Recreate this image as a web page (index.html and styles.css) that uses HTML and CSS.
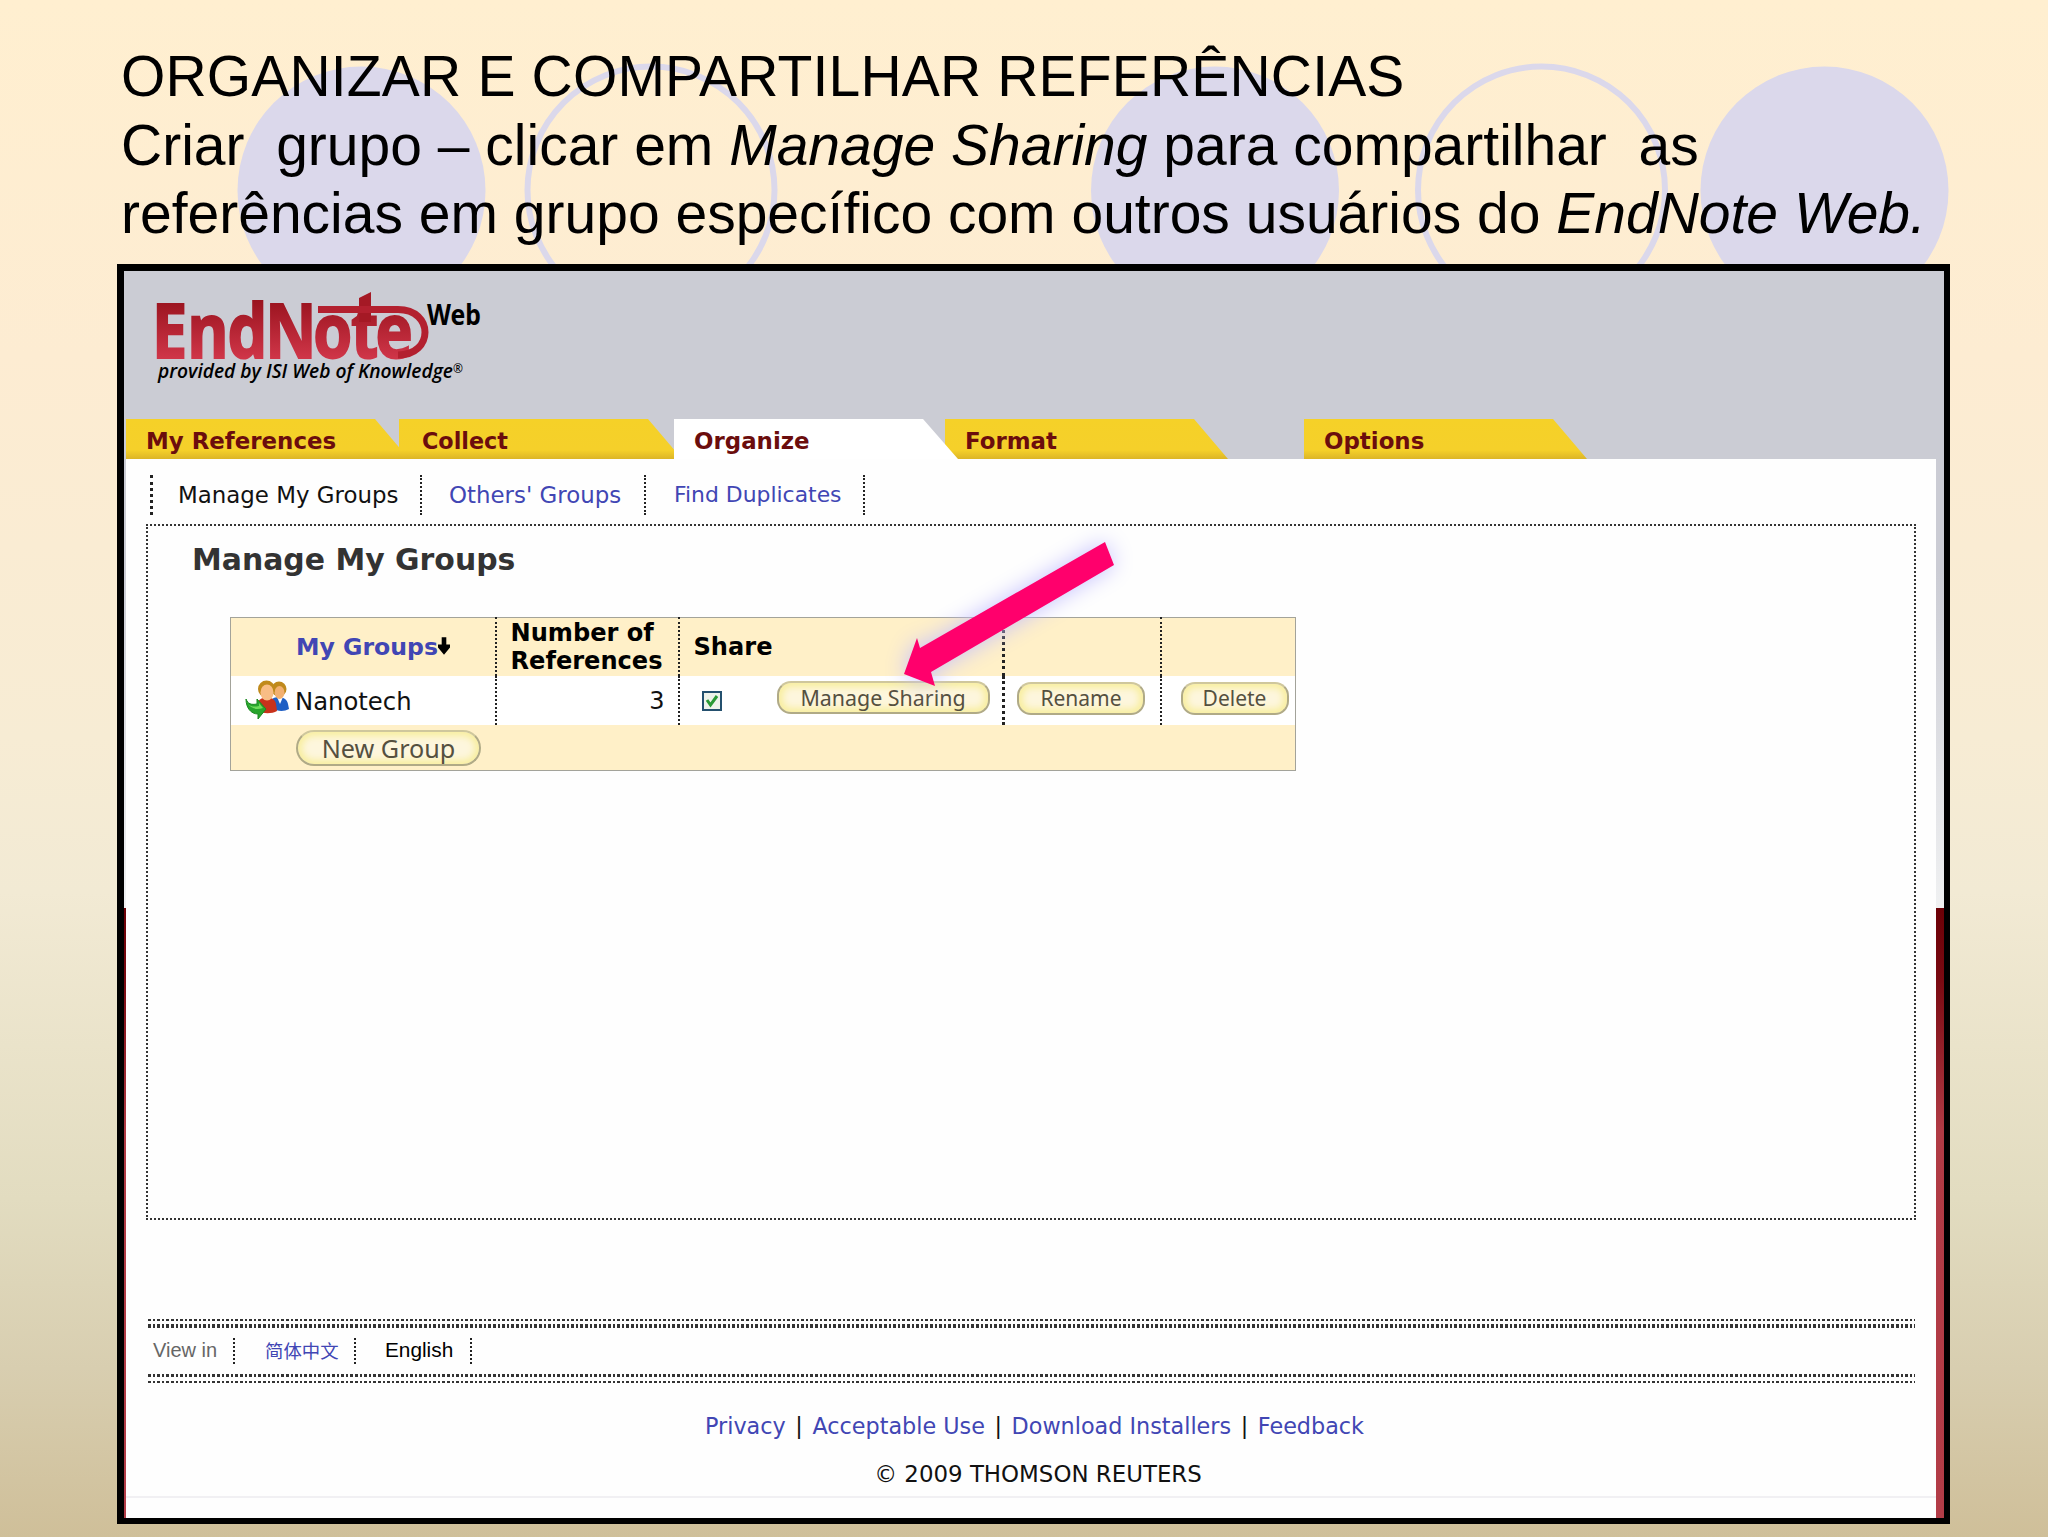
FILE: index.html
```html
<!DOCTYPE html>
<html lang="pt-BR">
<head>
    <meta charset="UTF-8">
    <meta name="viewport" content="width=device-width, initial-scale=1.0">
    <title>Organizar e compartilhar referências</title>
    <link rel="stylesheet" href="styles.css">
</head>
<body>
    <div class="slide">
        <svg class="circles" width="2048" height="264" viewBox="0 0 2048 264">
            <circle class="disc" cx="361.5" cy="190.5" r="124"/>
            <circle class="ring" cx="651" cy="190" r="123.5"/>
            <circle class="disc" cx="1215" cy="190.5" r="124"/>
            <circle class="ring" cx="1541.5" cy="190" r="123.5"/>
            <circle class="disc" cx="1824.5" cy="190.5" r="124"/>
        </svg>

        <h1 class="slide-title"><span class="caps">ORGANIZAR E COMPARTILHAR REFERÊNCIAS</span><br>Criar&nbsp; grupo – clicar em <em>Manage Sharing</em> para compartilhar&nbsp; as<br>referências em grupo específico com outros usuários do <em>EndNote Web.</em></h1>

        <div class="screen">
            <header class="header">
                <svg class="logo" width="360" height="119" viewBox="150 271 360 119">
                    <defs>
                        <linearGradient id="logo-red" gradientUnits="userSpaceOnUse" x1="0" y1="-60" x2="0" y2="0">
                            <stop offset="0" stop-color="#98121d"/>
                            <stop offset="1" stop-color="#cf3548"/>
                        </linearGradient>
                    </defs>
                    <text class="logo-name" transform="translate(157 358) scale(.84 1)" x="-6 36 84 129 186 231 260" y="0">EndNote</text>
                    <path class="logo-stem" d="M359 298L371 292V322H359z"/>
                    <path class="logo-loop" d="M318 309.500H398C434 309.500 434 355 398 355"/>
                    <text class="logo-web" x="427" y="325" textLength="54" lengthAdjust="spacingAndGlyphs">Web</text>
                    <text class="logo-by" x="158" y="378" textLength="295" lengthAdjust="spacingAndGlyphs">provided by ISI Web of Knowledge</text>
                    <text class="logo-reg" x="453" y="373">®</text>
                </svg>
                <nav class="tabs">
                    <a class="tab tab-references">My References</a>
                    <a class="tab tab-collect">Collect</a>
                    <a class="tab tab-organize active">Organize</a>
                    <a class="tab tab-format">Format</a>
                    <a class="tab tab-options">Options</a>
                </nav>
            </header>

            <main class="page">
                <ul class="subnav">
                    <li class="current">Manage My Groups</li>
                    <li><a>Others' Groups</a></li>
                    <li class="last"><a>Find Duplicates</a></li>
                </ul>

                <section class="panel">
                    <h2>Manage My Groups</h2>
                    <table class="groups">
                        <colgroup>
                            <col class="col-name">
                            <col class="col-count">
                            <col class="col-share">
                            <col class="col-rename">
                            <col class="col-delete">
                        </colgroup>
                        <tr class="head">
                            <th class="name"><a>My Groups</a><svg class="sort" width="12" height="18" viewBox="0 0 13 19"><path d="M4 0h5v8h4v3L6.500 19 0 11V8h4z"/></svg></th>
                            <th>Number of References</th>
                            <th>Share</th>
                            <th></th>
                            <th></th>
                        </tr>
                        <tr class="row">
                            <td>
                                <div class="group">
                                    <svg class="people" width="46" height="40" viewBox="0 0 46 40">
                                        <path fill="#1f5fc4" d="M26 20c4-5 16-4 17 4l1 5c-5 3-12 2-16 0z"/>
                                        <path fill="#fff" d="M32 17l3 7 3-7z"/>
                                        <circle cx="34" cy="9" r="7.500" fill="#c08a1c"/>
                                        <ellipse cx="34.500" cy="12.500" rx="5" ry="6.500" fill="#f3b070"/>
                                        <path fill="#c8321c" d="M12 24c2-9 18-9 19 0l1 7c-5 3-14 3-19 0z"/>
                                        <circle cx="21.500" cy="9" r="8.500" fill="#c08a1c"/>
                                        <ellipse cx="22" cy="12.500" rx="6.500" ry="8" fill="#f8bd85"/>
                                        <path fill="#27a52c" stroke="#1c8a22" d="M1 19c2 5 5 6 11 5v-5l9 10-8 10v-5C6 34 1 28 1 19z"/>
                                        <path fill="#6fdc5c" d="M3 24c3 3 7 3 11 2v-3l4 5c-6 2-11 1-15-4z"/>
                                    </svg>
                                    <span>Nanotech</span>
                                </div>
                            </td>
                            <td class="count">3</td>
                            <td>
                                <div class="share">
                                    <span class="checkbox"><svg width="14" height="14" viewBox="0 0 14 14"><path d="M2 6l3.500 5L12 2"/></svg></span>
                                    <button class="btn btn-sharing">Manage Sharing</button>
                                </div>
                            </td>
                            <td><button class="btn btn-rename">Rename</button></td>
                            <td><button class="btn btn-delete">Delete</button></td>
                        </tr>
                        <tr class="foot">
                            <td colspan="5"><button class="btn btn-new">New Group</button></td>
                        </tr>
                    </table>
                </section>

                <footer class="footer">
                    <div class="rule rule-thin"></div>
                    <div class="rule rule-thick"></div>
                    <div class="languages">
                        <span class="label">View in</span>
                        <a class="chinese">简体中文</a>
                        <span class="english">English</span>
                    </div>
                    <div class="rule rule-mid"></div>
                    <div class="rule rule-thin"></div>
                    <p class="links"><a>Privacy</a> | <a>Acceptable Use</a> | <a>Download Installers</a> | <a>Feedback</a></p>
                    <p class="copyright">© 2009 THOMSON REUTERS</p>
                </footer>
            </main>
        </div>

        <svg class="arrow" width="260" height="190" viewBox="880 520 260 190">
            <polygon points="904,674 917,638 920,648 1105,542 1114,565 931,672 935,686"/>
        </svg>
    </div>
</body>
</html>
```

FILE: styles.css
```css
* {
    box-sizing: border-box;
}
body {
    margin: 0;
    font-family: "DejaVu Sans", Verdana, sans-serif;
    color: #111;
}
.slide {
    position: relative;
    width: 2048px;
    height: 1537px;
    padding: 42px 0 0 117px;
    overflow: hidden;
    background: linear-gradient(#ffefd0 0%, #fdecd2 23%, #f7ecd4 48%, #f2ead4 58%, #e2dcc0 78%, #d8ceb0 89%, #cfbf99 100%);
}
.circles {
    position: absolute;
    top: 0;
    left: 0;
}
.disc {
    fill: #dbd8eb;
}
.ring {
    fill: none;
    stroke: #dbd8eb;
    stroke-width: 6;
}
.slide-title {
    position: relative;
    height: 222px;
    margin: 0;
    padding-left: 4px;
    font: 57px/68.6px "Liberation Sans", Arial, sans-serif;
    color: #000;
    white-space: nowrap;
}
.caps {
    letter-spacing: 0.17px;
}

/* browser window */
.screen {
    width: 1833px;
    height: 1260px;
    border: solid #000;
    border-width: 7px 6px 6px 7px;
    background: linear-gradient(#cbccd4 0, #cbccd4 300px, #f0f1f2 637px, #6b0006 637px, #7a0a12 710px, #b03a44 860px, #b23c47 100%);
}
.header {
    height: 188px;
    padding-left: 26px;
    background: #cbccd4;
}
.logo {
    display: block;
    overflow: visible;
}
.logo-name {
    font: 700 75px "Open Sans", sans-serif;
    fill: url(#logo-red);
    stroke: url(#logo-red);
    stroke-width: 2;
}
.logo-stem {
    fill: #a51925;
}
.logo-loop {
    fill: none;
    stroke: #b3202f;
    stroke-width: 7;
}
.logo-web {
    font: 700 28px "Noto Sans", sans-serif;
}
.logo-by {
    font: italic 600 19px "Open Sans", sans-serif;
}
.logo-reg {
    font: 12px "Noto Sans", sans-serif;
}
.tabs {
    display: flex;
    height: 40px;
    margin: 29px 0 0 -24px;
}
.tab {
    width: 283px;
    padding-left: 20px;
    font-size: 22.9px;
    font-weight: bold;
    line-height: 44px;
    color: #6b0d0d;
    background: linear-gradient(#f5d128 0, #f5d02a 78%, #dcb526 100%);
    clip-path: polygon(0 0, 249px 0, 100% 100%, 0 100%);
}
.tab-references {
    z-index: 1;
}
.tab-collect {
    margin-left: -10px;
    padding-left: 23px;
    font-size: 22.3px;
}
.tab-organize {
    z-index: 2;
    width: 284px;
    margin-left: -8px;
}
.tab-format {
    margin-left: -13px;
}
.tab-options {
    margin-left: 76px;
}
.tab.active {
    background: #fff;
}

/* page */
.page {
    height: 1059px;
    margin: 0 8px 0 2px;
    background: #fefefe;
}
a {
    color: #4146b4;
}
.subnav {
    display: flex;
    margin: 0;
    padding: 16px 0 9px 24px;
    list-style: none;
    font-size: 22.9px;
    line-height: 40px;
}
.subnav li {
    width: 224px;
    padding-left: 27px;
    border-left: 2px dotted #222;
}
.subnav .current {
    width: 270px;
    padding-left: 25px;
    border-left-width: 3px;
}
.subnav .last {
    width: 221px;
    padding-left: 28px;
    border-right: 2px dotted #222;
    font-size: 21.9px;
}
.panel {
    width: 1770px;
    height: 696px;
    margin-left: 20px;
    padding: 13px 0 0 82px;
    border: 2px dotted #333;
}
.panel h2 {
    margin: 0 0 0 -38px;
    font-size: 29.9px;
    line-height: 42px;
    color: #333;
}
.groups {
    width: 1066px;
    margin-top: 36px;
    border: 1px solid #a3a39a;
    border-collapse: collapse;
    table-layout: fixed;
    font-size: 24px;
    background: #fff;
}
.col-name {
    width: 265px;
}
.col-count {
    width: 183px;
}
.col-share {
    width: 325px;
}
.col-rename {
    width: 157px;
}
.groups th,
.groups td {
    padding: 0;
    border-left: 2px dotted #222;
    text-align: left;
}
.groups th:nth-child(4),
.groups td:nth-child(4) {
    border-left-width: 3px;
}
.groups tr th:first-child,
.groups tr td:first-child {
    border-left: 1px solid #a3a39a;
}
.groups .head {
    height: 58px;
    background: #fff0c8;
}
.groups .row {
    height: 49px;
}
.groups .foot {
    height: 46px;
    background: #fff0c8;
}
.groups th {
    padding-left: 14px;
    font-size: 24.1px;
    line-height: 28px;
    color: #000;
}
.groups .name {
    padding-left: 65px;
    font-size: 23.6px;
}
.group {
    display: flex;
    align-items: center;
    gap: 4px;
    padding-left: 14px;
}
.group span {
    padding-top: 2px;
    font-size: 24.3px;
}
.groups .count {
    padding: 2px 13px 0 0;
    text-align: right;
}
.share {
    display: flex;
    align-items: center;
    gap: 55px;
    padding-left: 22px;
}
.checkbox {
    display: flex;
    align-items: center;
    justify-content: center;
    width: 20px;
    height: 20px;
    margin-top: 1px;
    border: 2px solid #24506e;
    background: #eef3ea;
}
.checkbox path {
    fill: none;
    stroke: #2a9a35;
    stroke-width: 3;
}
.btn {
    display: block;
    height: 33px;
    margin-bottom: 4px;
    padding: 0;
    border: 2px solid #b0aa86;
    border-top-color: #cfc79c;
    border-radius: 14px;
    background: #fdf6dd;
    box-shadow: inset 0 0 7px 4px #f8ee9f;
    font: 21px/27px "Noto Sans", sans-serif;
    color: #55503f;
}
.btn-sharing {
    width: 213px;
    margin-bottom: 5px;
    font-size: 21.4px;
}
.btn-rename {
    width: 128px;
    margin-left: 12px;
}
.btn-delete {
    width: 108px;
    margin-left: 19px;
}
.btn-new {
    width: 185px;
    height: 36px;
    margin: 2px 0 0 65px;
    border-radius: 18px;
    font-size: 25.2px;
}

/* footer */
.footer {
    margin-top: 99px;
}
.rule {
    height: 2px;
    margin: 0 21px 0 22px;
    background: repeating-linear-gradient(90deg, #333 0, #333 2.6px, #fff 2.6px, #fff 4.6px);
}
.rule-thick {
    height: 4px;
    margin-top: 3px;
}
.rule-mid {
    height: 3px;
    margin-bottom: 4px;
}
.languages {
    display: flex;
    align-items: center;
    height: 46px;
    padding-left: 27px;
    font: 20px "Liberation Sans", sans-serif;
}
.languages > * {
    height: 26px;
    line-height: 24px;
    border-right: 2px dotted #222;
}
.label {
    width: 82px;
    color: #666;
}
.chinese {
    width: 121px;
    padding-left: 30px;
    font-family: "Noto Sans CJK SC", sans-serif;
    font-size: 18.4px;
}
.english {
    width: 116px;
    padding-left: 29px;
    color: #000;
    font-size: 20.8px;
}
.links,
.copyright {
    margin: 0;
    font-size: 22.3px;
    line-height: 30px;
    text-align: center;
}
.links {
    margin-top: 28px;
    padding-left: 7px;
}
.links a {
    margin: 0 2.5px;
}
.copyright {
    margin-top: 18px;
    padding: 0 0 7px 14px;
    border-bottom: 2px solid #f1f0f3;
    font-size: 22.9px;
}

.arrow {
    position: absolute;
    top: 520px;
    left: 880px;
    overflow: visible;
    fill: #ff006c;
    filter: drop-shadow(0 0 11px #c4c0ff);
}
```
